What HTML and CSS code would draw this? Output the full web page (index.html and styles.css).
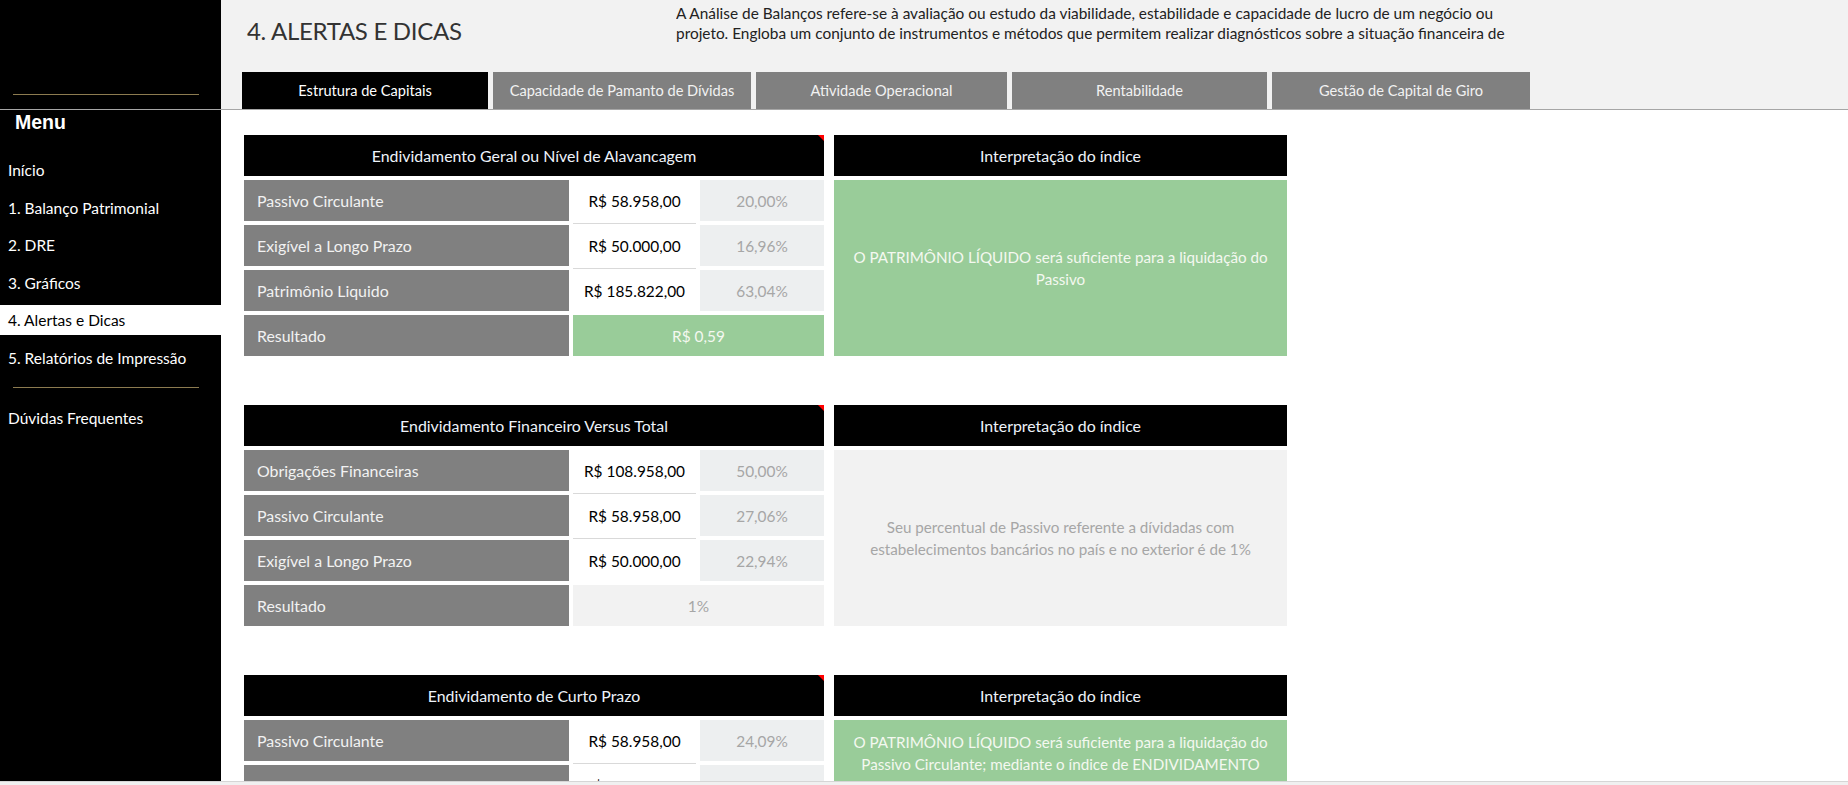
FILE: index.html
```html
<!DOCTYPE html>
<html lang="pt-BR">
<head>
<meta charset="utf-8">
<title>4. Alertas e Dicas</title>
<link rel="stylesheet" href="styles.css">
</head>
<body>
<div class="app">
  <aside class="sidebar">
    <div class="side-top"><div class="gold"></div></div>
    <div class="menu-title">Menu</div>
    <nav class="menu">
      <a href="#">Início</a>
      <a href="#">1. Balanço Patrimonial</a>
      <a href="#">2. DRE</a>
      <a href="#">3. Gráficos</a>
      <a href="#" class="active">4. Alertas e Dicas</a>
      <a href="#">5. Relatórios de Impressão</a>
      <div class="gold gold-menu"></div>
      <a href="#">Dúvidas Frequentes</a>
    </nav>
  </aside>

  <main class="main">
    <header class="topbar">
      <div class="topbar-row">
        <h1 class="title">4. ALERTAS E DICAS</h1>
        <p class="desc">A Análise de Balanços refere-se à avaliação ou estudo da viabilidade, estabilidade e capacidade de lucro de um negócio ou<br>projeto. Engloba um conjunto de instrumentos e métodos que permitem realizar diagnósticos sobre a situação financeira de</p>
      </div>
      <nav class="tabs">
        <a href="#" class="tab active">Estrutura de Capitais</a>
        <a href="#" class="tab">Capacidade de Pamanto de Dívidas</a>
        <a href="#" class="tab">Atividade Operacional</a>
        <a href="#" class="tab">Rentabilidade</a>
        <a href="#" class="tab">Gestão de Capital de Giro</a>
      </nav>
    </header>

    <section class="content">
      <div class="card-row">
        <div class="table">
          <div class="thead">Endividamento Geral ou Nível de Alavancagem<span class="note"></span></div>
          <div class="label">Passivo Circulante</div><div class="val sep">R$ 58.958,00</div><div class="pct">20,00%</div>
          <div class="label">Exigível a Longo Prazo</div><div class="val sep">R$ 50.000,00</div><div class="pct">16,96%</div>
          <div class="label">Patrimônio Liquido</div><div class="val">R$ 185.822,00</div><div class="pct">63,04%</div>
          <div class="label">Resultado</div><div class="result good">R$ 0,59</div>
        </div>
        <div class="interp">
          <div class="thead">Interpretação do índice</div>
          <div class="interp-body good">O PATRIMÔNIO LÍQUIDO será suficiente para a liquidação do<br>Passivo</div>
        </div>
      </div>

      <div class="card-row">
        <div class="table">
          <div class="thead">Endividamento Financeiro Versus Total<span class="note"></span></div>
          <div class="label">Obrigações Financeiras</div><div class="val sep">R$ 108.958,00</div><div class="pct">50,00%</div>
          <div class="label">Passivo Circulante</div><div class="val sep">R$ 58.958,00</div><div class="pct">27,06%</div>
          <div class="label">Exigível a Longo Prazo</div><div class="val">R$ 50.000,00</div><div class="pct">22,94%</div>
          <div class="label">Resultado</div><div class="result neutral">1%</div>
        </div>
        <div class="interp">
          <div class="thead">Interpretação do índice</div>
          <div class="interp-body neutral">Seu percentual de Passivo referente a dívidadas com<br>estabelecimentos bancários no país e no exterior é de 1%</div>
        </div>
      </div>

      <div class="card-row">
        <div class="table">
          <div class="thead">Endividamento de Curto Prazo<span class="note"></span></div>
          <div class="label">Passivo Circulante</div><div class="val sep">R$ 58.958,00</div><div class="pct">24,09%</div>
          <div class="label">Patrimônio Liquido</div><div class="val sep">R$ 185.822,00</div><div class="pct">75,91%</div>
          <div class="label">Exigível a Longo Prazo</div><div class="val">R$ 50.000,00</div><div class="pct">20,43%</div>
          <div class="label">Resultado</div><div class="result good">R$ 0,24</div>
        </div>
        <div class="interp">
          <div class="thead">Interpretação do índice</div>
          <div class="interp-body good top">O PATRIMÔNIO LÍQUIDO será suficiente para a liquidação do<br>Passivo Circulante; mediante o índice de ENDIVIDAMENTO<br>de CURTO PRAZO a empresa possui boa capacidade de<br>pagamento de suas obrigações</div>
        </div>
      </div>
    </section>
  </main>
</div>
<div class="hscroll"></div>
</body>
</html>
```

FILE: styles.css
```css
* { box-sizing: border-box; margin: 0; padding: 0; }

html, body {
  height: 785px;
  overflow: hidden;
  background: #fff;
}

body {
  font-family: Lato, "Open Sans", sans-serif;
  font-size: 15px;
}

a { text-decoration: none; }

.app {
  display: flex;
  height: 781px;
  overflow: hidden;
}

/* ---------- sidebar ---------- */
.sidebar {
  width: 221px;
  flex: none;
  background: #000;
  color: #fff;
  display: flex;
  flex-direction: column;
}

.side-top {
  height: 110px;
  padding-top: 94px;
  border-bottom: 1px solid #a6a6a6;
}

.gold {
  height: 1px;
  background: #8c7b50;
  margin: 0 22px 0 13px;
}

.menu-title {
  font-family: "Liberation Sans", Arial, sans-serif;
  font-weight: bold;
  font-size: 19.5px;
  line-height: 24px;
  padding-left: 15px;
}

.menu {
  display: flex;
  flex-direction: column;
  gap: 7.5px;
  margin-top: 21px;
}

.menu a {
  display: block;
  height: 30px;
  line-height: 30px;
  padding-left: 8px;
  color: #fff;
  font-size: 15.5px;
}

.menu a.active {
  background: #fff;
  color: #000;
}

.menu .gold-menu {
  margin: 7px 22px 7px 13px;
}

/* ---------- main ---------- */
.main {
  flex: 1;
  min-width: 0;
  display: flex;
  flex-direction: column;
}

.topbar {
  height: 110px;
  flex: none;
  background: #f2f2f2;
  border-bottom: 1px solid #a6a6a6;
  display: flex;
  flex-direction: column;
}

.topbar-row {
  height: 72px;
  display: flex;
}

.title {
  width: 455px;
  flex: none;
  padding: 14px 0 0 26px;
  font-size: 24px;
  letter-spacing: -0.3px;
  line-height: 34px;
  font-weight: 400;
  color: #333;
}

.desc {
  padding-top: 3px;
  font-size: 15.4px;
  line-height: 20px;
  color: #222;
  white-space: nowrap;
  overflow: hidden;
  width: 840px;
}

.tabs {
  display: flex;
  gap: 5px;
  padding-left: 21px;
  height: 37px;
}

.tab {
  display: flex;
  align-items: center;
  justify-content: center;
  background: #808080;
  color: #f2f2f2;
  font-size: 14.6px;
}

.tab:nth-child(1) { width: 246px; }
.tab:nth-child(2) { width: 258px; }
.tab:nth-child(3) { width: 251px; }
.tab:nth-child(4) { width: 255px; }
.tab:nth-child(5) { width: 258px; }

.tab.active {
  background: #000;
  color: #fff;
}

/* ---------- content ---------- */
.content {
  padding: 25px 0 0 23px;
  display: flex;
  flex-direction: column;
  gap: 49px;
}

.card-row {
  display: flex;
  gap: 10px;
}

.table {
  width: 580px;
  flex: none;
  display: grid;
  grid-template-columns: 325px 123px 124px;
  grid-template-rows: repeat(5, 41px);
  gap: 4px;
}

.thead {
  position: relative;
  grid-column: 1 / -1;
  background: #000;
  color: #eef3fa;
  display: flex;
  align-items: center;
  justify-content: center;
  font-size: 15.9px;
}

.note {
  position: absolute;
  top: 0;
  right: 0;
  width: 0;
  height: 0;
  border-top: 6px solid #ff0000;
  border-left: 6px solid transparent;
}

.label {
  background: #808080;
  color: #f2f2f2;
  display: flex;
  align-items: center;
  padding-left: 13px;
  font-size: 15.9px;
}

.val,
.pct,
.result {
  display: flex;
  align-items: center;
  justify-content: center;
  font-size: 15.4px;
}

.val {
  position: relative;
  background: #fff;
  color: #000;
}

.val.sep::after {
  content: "";
  position: absolute;
  left: 0;
  right: 0;
  bottom: -3px;
  height: 1px;
  background: #d9d9d9;
}

.pct {
  background: #edeff0;
  color: #a6a6a6;
}

.result {
  grid-column: 2 / -1;
}

.good {
  background: #99cc99;
  color: #f4f8f0;
}

.neutral {
  background: #f2f2f2;
  color: #a6a6a6;
}

.interp {
  width: 453px;
  flex: none;
  display: grid;
  grid-template-rows: 41px 176px;
  gap: 4px;
}

.interp-body {
  display: flex;
  align-items: center;
  justify-content: center;
  text-align: center;
  font-size: 15.2px;
  line-height: 22px;
  padding: 0 4px;
  white-space: nowrap;
  overflow: hidden;
}

.interp-body.top {
  align-items: flex-start;
  padding-top: 11px;
}

.hscroll {
  height: 4px;
  background: #f0f0f0;
  border-top: 1px solid #d6d6d6;
}
```
